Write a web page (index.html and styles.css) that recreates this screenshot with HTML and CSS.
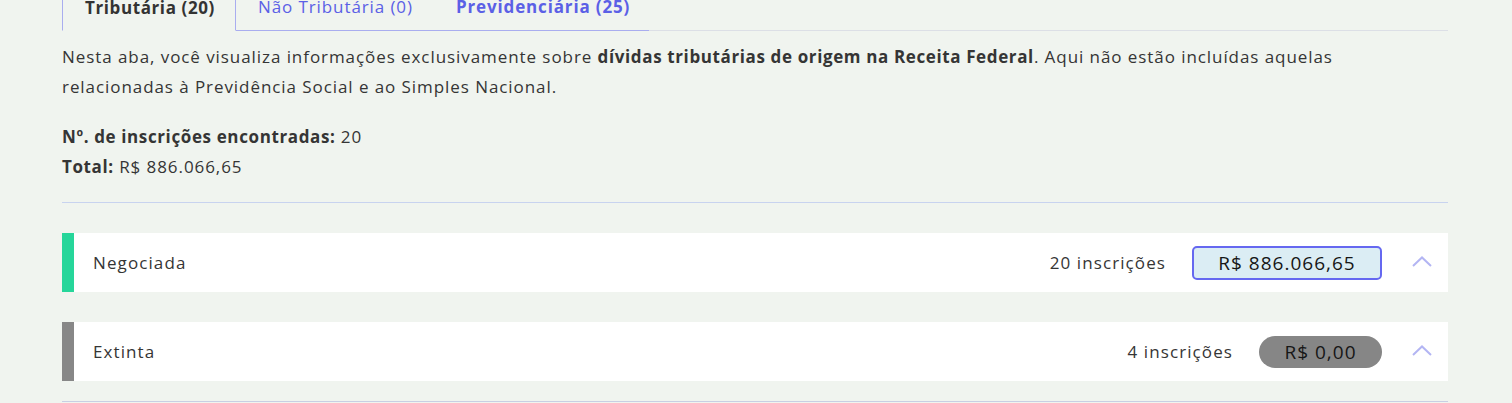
FILE: index.html
```html
<!DOCTYPE html>
<html lang="pt-BR">
<head>
<meta charset="utf-8">
<link rel="stylesheet" href="styles.css">
</head>
<body>
<div class="page">
  <div class="tabs">
    <div class="tab active">Tributária (20)</div>
    <div class="tab link">Não Tributária (0)</div>
    <div class="tab link strong">Previdenciária (25)</div>
    <div class="tab-fill"></div>
  </div>
  <p class="intro">Nesta aba, você visualiza informações exclusivamente sobre <b>dívidas tributárias de origem na Receita Federal</b>. Aqui não estão incluídas aquelas relacionadas à Previdência Social e ao Simples Nacional.</p>
  <div class="summary">
    <div><b>Nº. de inscrições encontradas:</b> 20</div>
    <div><b>Total:</b> R$ 886.066,65</div>
  </div>
  <hr class="sep">
  <div class="card">
    <div class="bar green"></div>
    <div class="card-body">
      <span class="label">Negociada</span>
      <span class="count">20 inscrições</span>
      <span class="badge blue">R$ 886.066,65</span>
      <svg class="chev" width="20" height="11" viewBox="0 0 20 11"><path d="M1 10 L10 1.5 L19 10" fill="none" stroke="#b3b5f3" stroke-width="2"/></svg>
    </div>
  </div>
  <div class="card">
    <div class="bar gray"></div>
    <div class="card-body">
      <span class="label">Extinta</span>
      <span class="count">4 inscrições</span>
      <span class="badge pill">R$ 0,00</span>
      <svg class="chev" width="20" height="11" viewBox="0 0 20 11"><path d="M1 10 L10 1.5 L19 10" fill="none" stroke="#b3b5f3" stroke-width="2"/></svg>
    </div>
  </div>
  <div class="bottom-line"></div>
</div>
</body>
</html>
```
FILE: styles.css
```css
html, body {
  margin: 0;
  padding: 0;
  background: #f0f4ef;
}
body {
  font-family: "Open Sans", "Lato", sans-serif;
  color: #353535;
  letter-spacing: 0.93px;
  overflow: hidden;
}
b {
  letter-spacing: 0.62px;
}
.page {
  margin: -15px 64px 0 62px;
}
.tabs {
  display: flex;
  height: 46px;
}
.tab {
  flex: none;
  white-space: nowrap;
  font-size: 17px;
  line-height: 44px;
  padding: 0 22px;
  box-sizing: border-box;
  border-bottom: 1px solid #a9adef;
}
.tab.active {
  font-weight: 700;
  color: #333;
  letter-spacing: 0.6px;
  border: 1px solid #a9adef;
  border-bottom: 1px solid transparent;
  width: 174px;
}
.tab.link {
  color: #5b60e6;
  letter-spacing: 0.9px;
  width: 198px;
}
.tab.strong {
  font-weight: 700;
  letter-spacing: 0.85px;
  width: 215px;
}
.tab-fill {
  flex: 1;
  border-bottom: 1px solid #dcdfe6;
}
.intro {
  margin: 11px 0 0;
  max-width: 1300px;
  font-size: 17px;
  line-height: 30px;
}
.summary {
  margin-top: 20px;
  font-size: 17px;
  line-height: 30px;
}
.sep {
  margin: 20px 0 0;
  border: 0;
  border-top: 1px solid #c8d3ef;
}
.card {
  display: flex;
  background: #ffffff;
  height: 59px;
  margin-top: 30px;
}
.card + .card {
  margin-top: 30px;
}
.bar {
  width: 12px;
}
.bar.green { background: #26d69a; }
.bar.gray { background: #878787; }
.card-body {
  flex: 1;
  display: flex;
  align-items: center;
  padding: 0 16px 0 19px;
}
.label {
  flex: 1;
  font-size: 17px;
  letter-spacing: 1.1px;
}
.count {
  font-size: 17px;
  letter-spacing: 1.1px;
  margin-right: 26px;
}
.badge {
  font-size: 19px;
  letter-spacing: 1px;
  color: #161616;
  text-align: center;
  box-sizing: border-box;
}
.badge.blue {
  width: 190px;
  height: 34px;
  line-height: 30px;
  background: #dbedf4;
  border: 2px solid #6568f0;
  border-radius: 5px;
}
.badge.pill {
  width: 123px;
  height: 32px;
  line-height: 32px;
  background: #868686;
  border-radius: 16px;
}
.chev {
  margin-left: 30px;
  margin-top: -2px;
}
.bottom-line {
  margin-top: 20px;
  border-top: 1px solid #c8cfe3;
}
```
